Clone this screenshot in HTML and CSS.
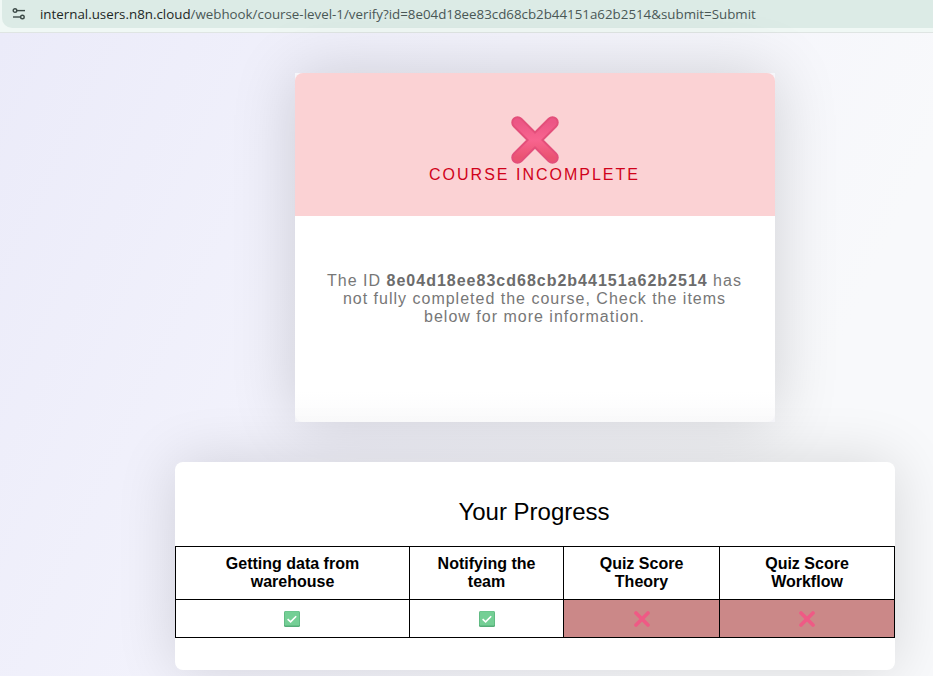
FILE: index.html
```html
<!DOCTYPE html>
<html lang="en">
<head>
<meta charset="utf-8">
<title>Course Incomplete</title>
<link rel="stylesheet" href="styles.css">
</head>
<body>
<svg class="defs" width="0" height="0" aria-hidden="true">
  <defs>
    <linearGradient id="xgrad" x1="0" y1="0" x2="0" y2="1">
      <stop offset="0" stop-color="#ec5685"/>
      <stop offset="0.5" stop-color="#f8648f"/>
      <stop offset="1" stop-color="#ea5372"/>
    </linearGradient>
    <symbol id="cross" viewBox="0 0 48 48">
      <path d="M6.5 6.5 L41.5 41.5 M41.5 6.5 L6.5 41.5" stroke="#e34f7a" stroke-width="12.5" stroke-linecap="round" fill="none"/>
      <path d="M6.5 6.5 L41.5 41.5 M41.5 6.5 L6.5 41.5" stroke="url(#xgrad)" stroke-width="8.5" stroke-linecap="round" fill="none"/>
    </symbol>
    <symbol id="cross-small" viewBox="0 0 48 48">
      <path d="M6 6 L42 42 M42 6 L6 42" stroke="#ef5a85" stroke-width="11" stroke-linecap="round" fill="none"/>
    </symbol>
    <symbol id="check" viewBox="0 0 16 16">
      <rect width="16" height="16" rx="1.5" fill="#55ad78"/>
      <rect x="0.6" y="0.3" width="14.8" height="14.3" rx="1.2" fill="#74cf95"/>
      <path d="M3.6 8.2 L6.6 10.8 L12.2 5.2" stroke="#fff" stroke-width="1.6" fill="none"/>
    </symbol>
  </defs>
</svg>
<header class="browser-bar">
  <div class="url-pill">
    <svg class="tune" viewBox="0 0 14 12" width="14" height="12" aria-hidden="true">
      <circle cx="3" cy="2.6" r="1.8" fill="none" stroke="#3c4a47" stroke-width="1.4"/>
      <path d="M5 2.6 H13" stroke="#3c4a47" stroke-width="1.4"/>
      <circle cx="10.4" cy="9" r="1.8" fill="none" stroke="#3c4a47" stroke-width="1.4"/>
      <path d="M1 9 H8.4" stroke="#3c4a47" stroke-width="1.4"/>
    </svg>
    <span class="url"><span class="host">internal.users.n8n.cloud</span>/webhook/course-level-1/verify?id=8e04d18ee83cd68cb2b44151a62b2514&amp;submit=Submit</span>
  </div>
</header>
<main class="page">
  <div class="column">
    <section class="status-card">
      <div class="status-head">
        <svg class="status-icon"><use href="#cross"/></svg>
        <h1 class="status-title">COURSE INCOMPLETE</h1>
      </div>
      <p class="status-text">The ID <b>8e04d18ee83cd68cb2b44151a62b2514</b> has not fully completed the course, Check the items below for more information.</p>
    </section>
    <section class="progress-card">
      <h2 class="progress-title">Your Progress</h2>
      <table class="progress-table">
        <colgroup>
          <col class="c1"><col class="c2"><col class="c3"><col class="c4">
        </colgroup>
        <thead>
          <tr>
            <th>Getting data from warehouse</th>
            <th>Notifying the team</th>
            <th>Quiz Score Theory</th>
            <th>Quiz Score Workflow</th>
          </tr>
        </thead>
        <tbody>
          <tr>
            <td class="first"><svg class="cell-icon"><use href="#check"/></svg></td>
            <td><svg class="cell-icon"><use href="#check"/></svg></td>
            <td class="fail"><svg class="cell-icon"><use href="#cross-small"/></svg></td>
            <td class="fail"><svg class="cell-icon"><use href="#cross-small"/></svg></td>
          </tr>
        </tbody>
      </table>
    </section>
  </div>
</main>
</body>
</html>
```
FILE: styles.css
```css
* { box-sizing: border-box; }
html, body { margin: 0; height: 100%; overflow: hidden; }
body {
  font-family: "Liberation Sans", Arial, sans-serif;
  background: #f8f9fb;
  display: flex;
  flex-direction: column;
}
.defs { position: absolute; }
.browser-bar {
  height: 33px;
  flex: none;
  background: #f0f8f5;
  border-bottom: 1px solid #dfe5e3;
  padding: 0 0 4px 2px;
}
.url-pill {
  height: 28px;
  background: #dcebe6;
  border-radius: 0 0 0 10px;
  display: flex;
  align-items: center;
  padding-left: 10px;
  gap: 14px;
}
.tune { flex: none; }
.url {
  font-family: "Open Sans", "Noto Sans", sans-serif;
  font-size: 13.33px;
  color: #4a5856;
  white-space: nowrap;
}
.host { color: #1d2725; }
.page {
  flex: 1;
  padding: 40px 38px 0 175px;
  background: linear-gradient(115deg, #ebebf9 0%, #f3f3fc 42%, #f8f9fb 80%);
}
.column {
  width: 720px;
  display: flex;
  flex-direction: column;
  align-items: center;
  gap: 40px;
}
.status-card {
  width: 480px;
  height: 349px;
  background: #f6f6fa;
  display: flex;
  flex-direction: column;
  box-shadow: 0 0 60px rgba(0, 0, 0, 0.16);
}
.status-head {
  height: 143px;
  flex: none;
  background: #fbd2d4;
  border-radius: 8px 8px 0 0;
  display: flex;
  flex-direction: column;
  align-items: center;
  padding-top: 43px;
}
.status-icon { width: 48px; height: 48px; display: block; }
.status-title {
  margin: 2px 0 0;
  padding-right: 1px;
  font-size: 16px;
  font-weight: 400;
  line-height: 18px;
  letter-spacing: 2px;
  color: #d0021b;
}
.status-text {
  flex: 1;
  margin: 0;
  padding: 56px 25px 0 24px;
  font-size: 16px;
  line-height: 18px;
  letter-spacing: 1px;
  color: #777;
  text-align: center;
  background: linear-gradient(#fff 0, #fff 85%, #fbfbfc 100%);
  border-radius: 0 0 8px 8px;
}
.status-text b { color: #6c6c6c; }
.progress-card {
  width: 720px;
  height: 208px;
  background: #fff;
  border-radius: 8px;
  padding-top: 36px;
  box-shadow: 0 0 60px rgba(0, 0, 0, 0.14);
}
.progress-title {
  margin: 0;
  padding-right: 2px;
  font-size: 24px;
  font-weight: 400;
  line-height: 27px;
  height: 48px;
  color: #000;
  text-align: center;
}
.progress-table {
  width: 719px;
  table-layout: fixed;
  border-collapse: collapse;
  font-size: 16px;
}
.c1 { width: 234px; }
.c2 { width: 154px; }
.c3 { width: 156px; }
.c4 { width: 175px; }
.progress-table th, .progress-table td {
  border: 1px solid #000;
  text-align: center;
  padding: 0 20px;
}
.progress-table th {
  height: 53px;
  line-height: 18px;
  font-weight: 700;
  color: #000;
}
.progress-table td {
  height: 38px;
  line-height: 0;
}
.progress-table td.first { padding-right: 22px; }
.progress-table td.fail { background: #cb8888; }
.cell-icon { width: 16px; height: 16px; display: inline-block; vertical-align: middle; }
```
